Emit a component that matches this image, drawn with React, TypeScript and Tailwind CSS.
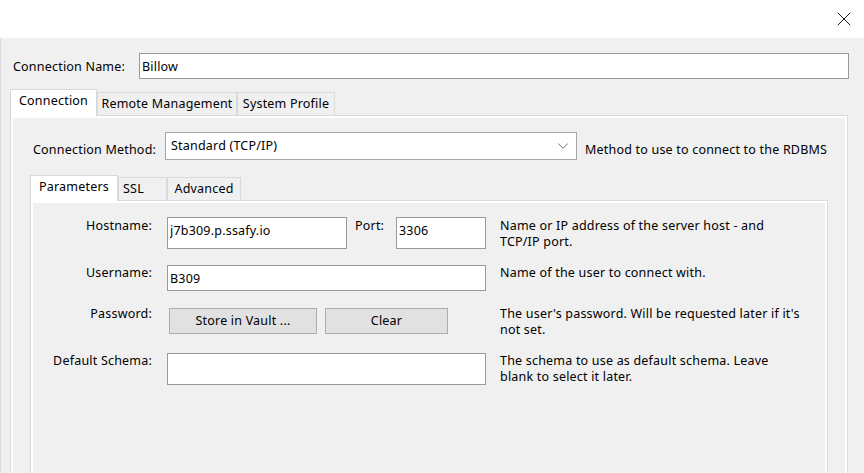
import { ChevronDown, X } from 'lucide-react';

const Tab = ({
  label,
  active,
  className = '',
}: {
  label: string;
  active?: boolean;
  className?: string;
}) =>
  active ? (
    <div className={`relative z-10 -mb-px flex shrink-0 justify-center border border-b-0 border-[#d9d9d9] bg-white ${className}`}>
      {label}
    </div>
  ) : (
    <div className={`flex shrink-0 border border-b-0 border-[#d9d9d9] bg-[#f0f0f0] ${className}`}>{label}</div>
  );

const Label = ({ children }: { children: React.ReactNode }) => (
  <span className="w-[119px] shrink-0 text-right">{children}</span>
);

const Hint = ({ children }: { children: React.ReactNode }) => (
  <p className="ml-[14px] whitespace-nowrap">{children}</p>
);

export default function App() {
  return (
    <div className="flex h-[473px] w-[864px] flex-col overflow-hidden bg-[#f0f0f0] font-['Segoe_UI','Noto_Sans',sans-serif] text-[12.5px] leading-[16px] tracking-[0.2px] text-black">
      <div className="flex h-[38px] shrink-0 items-center justify-end bg-white pr-[8px]">
        <X size={24} strokeWidth={1} className="text-[#1a1a1a]" />
      </div>

      <div className="flex flex-1 flex-col border-l border-[#dcdcdc]">
        <div className="flex items-center pl-[12px] pr-[15px] pt-[15px]">
          <span className="mt-[1px] w-[126px] shrink-0">Connection Name:</span>
          <input
            readOnly
            value="Billow"
            className="h-[26px] flex-1 border border-[#9a9a9a] bg-white pl-[2px] outline-none"
          />
        </div>

        <div className="mt-[10px] flex h-[26px] items-end pl-[9px]">
          <Tab active label="Connection" className="h-[27px] w-[87px] pt-[3px]" />
          <Tab label="Remote Management" className="h-[23px] w-[140px] justify-center pt-[3px]" />
          <Tab label="System Profile" className="h-[23px] w-[98px] justify-center pt-[3px]" />
        </div>

        <div className="ml-[9px] mr-[16px] h-[420px] shrink-0 border border-[#d9d9d9] bg-white p-[2px]">
          <div className="flex h-full flex-col bg-[#f0f0f0]">
            <div className="flex items-start pl-[20px] pt-[14px]">
              <span className="mt-[10px] w-[132px] shrink-0">Connection Method:</span>
              <div className="flex h-[28px] w-[412px] items-center justify-between border border-[#a6a6a6] bg-white pl-[5px] pr-[4px]">
                <span>Standard (TCP/IP)</span>
                <ChevronDown size={18} strokeWidth={1.1} className="text-[#555]" />
              </div>
              <span className="ml-[8px] mt-[10px] whitespace-nowrap">Method to use to connect to the RDBMS</span>
            </div>

            <div className="ml-[17px] mt-[15px] flex h-[25px] items-end">
              <Tab active label="Parameters" className="h-[26px] w-[88px] pt-[3px]" />
              <Tab label="SSL" className="h-[23px] w-[49px] pl-[4px] pt-[3px]" />
              <Tab label="Advanced" className="h-[23px] w-[74px] justify-center pt-[3px]" />
            </div>

            <div className="ml-[17px] mr-[17px] flex-1 border border-[#d9d9d9] bg-white p-[2px]">
              <div className="flex h-full flex-col bg-[#f0f0f0]">
                <div className="mt-[14px] flex h-[32px] items-start">
                  <Label>
                    <span className="mt-[1px] block">Hostname:</span>
                  </Label>
                  <input
                    readOnly
                    value="j7b309.p.ssafy.io"
                    className="ml-[15px] h-[32px] w-[180px] border border-[#9a9a9a] bg-white pb-[6px] pl-[2px] outline-none"
                  />
                  <span className="ml-[8px] mt-[1px] w-[41px] shrink-0">Port:</span>
                  <input
                    readOnly
                    value="3306"
                    className="h-[32px] w-[90px] border border-[#9a9a9a] bg-white pb-[6px] pl-[2px] outline-none"
                  />
                  <Hint>
                    <span className="mt-[1px] block">
                      Name or IP address of the server host - and
                      <br />
                      TCP/IP port.
                    </span>
                  </Hint>
                </div>

                <div className="mt-[16px] flex h-[26px] items-start">
                  <Label>Username:</Label>
                  <input
                    readOnly
                    value="B309"
                    className="ml-[15px] h-[26px] w-[319px] border border-[#9a9a9a] bg-white pl-[2px] outline-none"
                  />
                  <Hint>Name of the user to connect with.</Hint>
                </div>

                <div className="mt-[15px] flex h-[28px] items-start">
                  <Label>Password:</Label>
                  <div className="ml-[15px] mt-[2px] flex w-[319px] shrink-0 pl-[2px]">
                    <button
                      type="button"
                      className="h-[26px] w-[148px] border border-[#adadad] bg-[#e1e1e1]"
                    >
                      Store in Vault ...
                    </button>
                    <button
                      type="button"
                      className="ml-[8px] h-[26px] w-[123px] border border-[#adadad] bg-[#e1e1e1]"
                    >
                      Clear
                    </button>
                  </div>
                  <Hint>
                    The user's password. Will be requested later if it's
                    <br />
                    not set.
                  </Hint>
                </div>

                <div className="mt-[19px] flex h-[32px] items-start">
                  <Label>Default Schema:</Label>
                  <input
                    readOnly
                    value=""
                    className="ml-[15px] h-[32px] w-[319px] border border-[#9a9a9a] bg-white pl-[2px] outline-none"
                  />
                  <Hint>
                    The schema to use as default schema. Leave
                    <br />
                    blank to select it later.
                  </Hint>
                </div>
              </div>
            </div>
          </div>
        </div>
      </div>
    </div>
  );
}
